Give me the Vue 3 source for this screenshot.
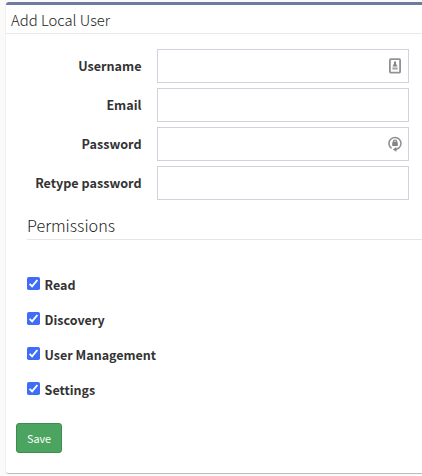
<script setup>
import { ref } from 'vue'

const fields = [
  { id: 'username', label: 'Username', type: 'text', icon: 'contact' },
  { id: 'email', label: 'Email', type: 'text', icon: '' },
  { id: 'password', label: 'Password', type: 'password', icon: 'generate' },
  { id: 'retype', label: 'Retype password', type: 'password', icon: '' }
]

const permissions = ref([
  { name: 'Read', granted: true },
  { name: 'Discovery', granted: true },
  { name: 'User Management', granted: true },
  { name: 'Settings', granted: true }
])
</script>

<template>
  <form class="box" @submit.prevent>
    <header class="box-header"><h3>Add Local User</h3></header>
    <div class="fields">
      <div v-for="f in fields" :key="f.id" class="row">
        <label :for="f.id">{{ f.label }}</label>
        <div class="control">
          <input :id="f.id" :type="f.type" />
          <svg v-if="f.icon === 'contact'" class="icon" viewBox="0 0 14 16">
            <rect x="1.9" y="1.2" width="10.2" height="13.4" rx="0.8" fill="#fff" stroke="#929292" stroke-width="1.8" />
            <path d="M6 3.4h2v2.4l1.5 2.6h-5L6 5.8z" fill="#858585" />
            <path d="M4.4 9.4h5.2v2.2H4.4z" fill="#a8a8a8" />
          </svg>
          <svg v-if="f.icon === 'generate'" class="icon" viewBox="0 0 14 16">
            <path d="M3.6 12.4A6 6 0 1 1 10.8 12.1L8 13.4" fill="none" stroke="#929292" stroke-width="1.6" />
            <path d="M8.4 10.9v4.9L4.8 13.4z" fill="#858585" />
            <path d="M4.2 6.2h.6V5.6a2.2 2.2 0 0 1 4.4 0v.6h.6V10H4.2z" fill="#858585" />
            <path d="M6.2 6V5.4a.8.8 0 0 1 1.6 0V6z" fill="#ddd" />
          </svg>
        </div>
      </div>
    </div>
    <h4 class="legend">Permissions</h4>
    <div class="permissions">
      <label v-for="p in permissions" :key="p.name" class="permission">
        <input v-model="p.granted" type="checkbox" />
        <svg class="check" viewBox="0 0 13 13">
          <rect width="13" height="13" rx="1.8" fill="#3f6df6" />
          <path d="M2.6 6.8L5.1 9.3L10.4 3" fill="none" stroke="#fff" stroke-width="1.9" />
        </svg>
        <span>{{ p.name }}</span>
      </label>
    </div>
    <button class="save" type="submit">Save</button>
  </form>
</template>

<style>
body {
  background: #fafafa;
}
</style>

<style scoped>
.box {
  box-sizing: border-box;
  height: 472px;
  margin: 2px 0 0 6px;
  border-top: 3px solid #6d7ba1;
  border-bottom: 1px solid #bbb;
  border-radius: 3px 0 0 3px;
  background: #fff;
  box-shadow: -1px 0 0 #f1f1f1;
  color: #333;
  font-family: "Noto Sans CJK JP", "Noto Sans", sans-serif;
}
.box-header {
  height: 28px;
  padding-left: 5px;
  border-bottom: 1px solid #e9e9e9;
}
h3,
h4 {
  margin: 0;
  color: #222;
  font-weight: 300;
}
h3 {
  font-size: 14.8px;
  line-height: 29px;
  white-space: nowrap;
}
.fields {
  display: flex;
  flex-direction: column;
  gap: 5px;
  padding-top: 15px;
}
.row {
  display: grid;
  grid-template-columns: 135.5px 252px;
  grid-template-rows: 34px;
  column-gap: 15.5px;
}
.row label {
  font-size: 12.6px;
  font-weight: 700;
  line-height: 33px;
  text-align: right;
}
.control {
  position: relative;
  height: 34px;
}
.control input {
  box-sizing: border-box;
  display: block;
  width: 252px;
  height: 34px;
  padding: 6px 30px 6px 12px;
  border: 1px solid #d2d2de;
  background: #fff;
  outline: none;
}
.icon {
  position: absolute;
  top: 9px;
  right: 7px;
  width: 14px;
  height: 16px;
}
.legend {
  height: 26px;
  margin: 13px 0 0 21px;
  border-bottom: 1px solid #e5e5e5;
  font-size: 16.2px;
  line-height: 24px;
}
.permissions {
  display: flex;
  flex-direction: column;
  gap: 15px;
  padding: 34px 0 0 21px;
}
.permission {
  display: flex;
  gap: 4.6px;
  height: 20px;
  font-size: 12.5px;
  font-weight: 700;
  line-height: 21px;
}
.permission input {
  display: none;
}
.check {
  width: 13px;
  height: 13px;
  margin-top: 3px;
}
.check path {
  visibility: hidden;
}
.permission input:checked + .check path {
  visibility: visible;
}
.save {
  display: block;
  width: 46px;
  height: 30px;
  margin: 24px 0 0 10px;
  padding: 0;
  border: 1px solid #3d8d50;
  border-radius: 3px;
  background: #4ba560;
  color: #fff;
  font: 400 10.8px/26px "Noto Sans CJK JP", "Noto Sans", sans-serif;
}
</style>
